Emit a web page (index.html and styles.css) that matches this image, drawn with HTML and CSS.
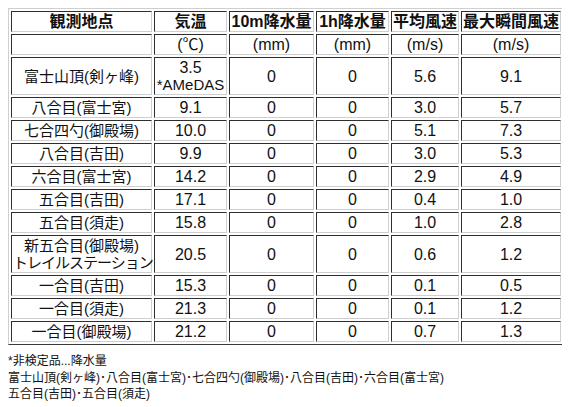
FILE: index.html
```html
<!DOCTYPE html>
<html lang="ja">
<head>
<meta charset="utf-8">
<title>富士山 観測データ</title>
<link rel="stylesheet" href="styles.css">
</head>
<body>
<table class="obs">
  <thead>
    <tr>
      <th class="c1">観測地点</th>
      <th class="c2">気温</th>
      <th class="c3">10m降水量</th>
      <th class="c4">1h降水量</th>
      <th class="c5">平均風速</th>
      <th class="c6">最大瞬間風速</th>
    </tr>
  </thead>
  <tbody>
    <tr class="units"><td></td><td>(℃)</td><td>(mm)</td><td>(mm)</td><td>(m/s)</td><td>(m/s)</td></tr>
    <tr><td>富士山頂(剣ヶ峰)</td><td>3.5<br><span class="note">*AMeDAS</span></td><td>0</td><td>0</td><td>5.6</td><td>9.1</td></tr>
    <tr><td>八合目(富士宮)</td><td>9.1</td><td>0</td><td>0</td><td>3.0</td><td>5.7</td></tr>
    <tr><td>七合四勺(御殿場)</td><td>10.0</td><td>0</td><td>0</td><td>5.1</td><td>7.3</td></tr>
    <tr><td>八合目(吉田)</td><td>9.9</td><td>0</td><td>0</td><td>3.0</td><td>5.3</td></tr>
    <tr><td>六合目(富士宮)</td><td>14.2</td><td>0</td><td>0</td><td>2.9</td><td>4.9</td></tr>
    <tr><td>五合目(吉田)</td><td>17.1</td><td>0</td><td>0</td><td>0.4</td><td>1.0</td></tr>
    <tr><td>五合目(須走)</td><td>15.8</td><td>0</td><td>0</td><td>1.0</td><td>2.8</td></tr>
    <tr><td>新五合目(御殿場)<br><span class="tight">トレイルステーション</span></td><td>20.5</td><td>0</td><td>0</td><td>0.6</td><td>1.2</td></tr>
    <tr><td>一合目(吉田)</td><td>15.3</td><td>0</td><td>0</td><td>0.1</td><td>0.5</td></tr>
    <tr><td>一合目(須走)</td><td>21.3</td><td>0</td><td>0</td><td>0.1</td><td>1.2</td></tr>
    <tr><td>一合目(御殿場)</td><td>21.2</td><td>0</td><td>0</td><td>0.7</td><td>1.3</td></tr>
  </tbody>
</table>
<div class="notes">
  <p>*非検定品...降水量</p>
  <p>富士山頂(剣ヶ峰)･八合目(富士宮)･七合四勺(御殿場)･八合目(吉田)･六合目(富士宮)</p>
  <p>五合目(吉田)･五合目(須走)</p>
</div>
</body>
</html>
```

FILE: styles.css
```css
html, body {
  background: #ffffff;
}

body {
  margin: 8px;
  color: #111111;
  font-family: "Liberation Sans", "Noto Sans CJK JP", sans-serif;
}

.obs {
  width: 556px;
  table-layout: fixed;
  border-collapse: separate;
  border-spacing: 2px;
  border-style: solid;
  border-width: 1px;
  border-color: #cfcfcf #3a3a3a #3a3a3a #cfcfcf;
  font-size: 15px;
  line-height: 17px;
}

.obs th,
.obs td {
  box-sizing: border-box;
  padding: 1px;
  text-align: center;
  vertical-align: middle;
  white-space: nowrap;
  border-style: solid;
  border-width: 1px;
  border-color: #2e2e2e #cfcfcf #cfcfcf #2e2e2e;
}

.obs th {
  font-size: 16px;
  font-weight: bold;
}

.obs td + td {
  font-size: 16px;
}

.obs .note {
  font-size: 15px;
}

.obs .tight {
  letter-spacing: -1px;
}

.obs .c1 { width: 141px; }
.obs .c2 { width: 73px; }
.obs .c3 { width: 85px; }
.obs .c4 { width: 73px; }
.obs .c5 { width: 68px; }
.obs .c6 { width: 100px; }

.notes {
  margin-top: 8px;
  font-size: 12px;
  line-height: 16.5px;
}

.notes p {
  margin: 0;
}
```
